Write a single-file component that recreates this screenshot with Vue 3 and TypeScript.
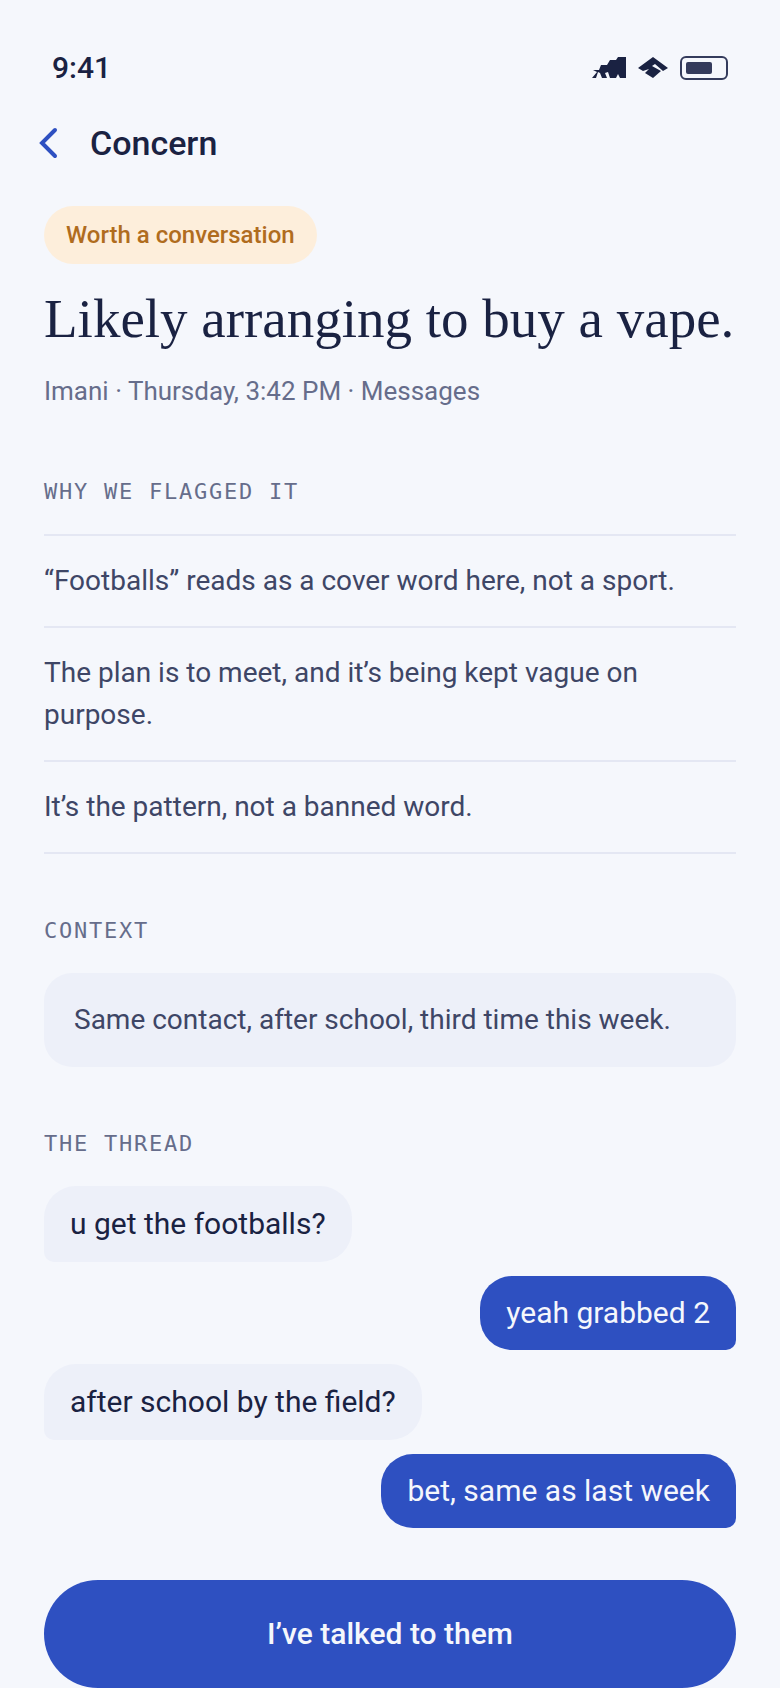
<script setup lang="ts">
interface Message {
  from: 'them' | 'me'
  text: string
}

const reasons: string[] = [
  '“Footballs” reads as a cover word here, not a sport.',
  'The plan is to meet, and it’s being kept vague on purpose.',
  'It’s the pattern, not a banned word.',
]

const thread: Message[] = [
  { from: 'them', text: 'u get the footballs?' },
  { from: 'me', text: 'yeah grabbed 2' },
  { from: 'them', text: 'after school by the field?' },
  { from: 'me', text: 'bet, same as last week' },
]
</script>

<template>
  <div class="screen">
    <div class="status">
      <span class="time">9:41</span>
      <div class="indicators">
        <svg class="signal" viewBox="0 0 34 22" aria-hidden="true">
          <path d="M34 0V21H28L26 17L24 21H18L16 15L13 16L15 21H10L8 16L6 15L4 21H0L5 15L1 13H7L9 8H15L18 3H24L26 0Z" />
        </svg>
        <svg class="wifi" viewBox="0 0 30 22" aria-hidden="true">
          <path d="M15 0L30 11L25 14L17 7L14 9L23 14L15 21L7 16L11 12L5 14L0 11Z" />
        </svg>
        <svg class="battery" viewBox="0 0 48 24" aria-hidden="true">
          <rect x="1" y="1" width="46" height="22" rx="5" />
          <rect class="charge" x="6" y="6" width="26" height="12" rx="2" />
        </svg>
      </div>
    </div>

    <header class="bar">
      <button class="back" type="button" aria-label="Back">
        <svg viewBox="0 0 20 32" aria-hidden="true"><path d="M17 3L4 16L17 29" /></svg>
      </button>
      <span class="bar-title">Concern</span>
    </header>

    <main class="content">
      <span class="badge">Worth a conversation</span>
      <h1>Likely arranging to buy a vape.</h1>
      <p class="meta">Imani · Thursday, 3:42 PM · Messages</p>

      <section>
        <h2>WHY WE FLAGGED IT</h2>
        <ul class="reasons">
          <li v-for="reason in reasons" :key="reason">{{ reason }}</li>
        </ul>
      </section>

      <section>
        <h2>CONTEXT</h2>
        <p class="context">Same contact, after school, third time this week.</p>
      </section>

      <section>
        <h2>THE THREAD</h2>
        <div class="thread">
          <p v-for="message in thread" :key="message.text" class="bubble" :class="message.from">
            {{ message.text }}
          </p>
        </div>
      </section>

      <button class="primary" type="button">I’ve talked to them</button>
    </main>
  </div>
</template>

<style>
body {
  background: #f5f7fc;
}
</style>

<style scoped>
.screen {
  box-sizing: border-box;
  min-height: 100vh;
  padding: 45px 44px 0;
  background: #f5f7fc;
  color: #1a2242;
  font-family: Roboto, "Liberation Sans", sans-serif;
}

.status {
  display: flex;
  align-items: center;
  justify-content: space-between;
  padding: 0 8px;
  height: 46px;
}

.time {
  font-size: 30px;
  font-weight: 500;
  line-height: 32px;
}

.indicators {
  display: flex;
  align-items: center;
  gap: 12px;
}

.signal {
  width: 34px;
  height: 22px;
  fill: #1a2242;
}

.wifi {
  width: 30px;
  height: 22px;
  fill: #1a2242;
}

.battery {
  width: 48px;
  height: 24px;
  fill: none;
  stroke: #343b5c;
  stroke-width: 2;
}

.battery .charge {
  fill: #343b5c;
  stroke: none;
}

.bar {
  display: flex;
  align-items: center;
  gap: 32px;
  height: 44px;
  margin: 30px 0 41px -6px;
}

.back {
  display: flex;
  padding: 0;
  border: 0;
  background: none;
}

.back svg {
  width: 20px;
  height: 32px;
  fill: none;
  stroke: #2e50c1;
  stroke-linecap: round;
  stroke-width: 4;
}

.bar-title {
  font-size: 34px;
  font-weight: 500;
}

.content {
  display: flex;
  flex-direction: column;
}

.badge {
  align-self: flex-start;
  padding: 14px 22px;
  border-radius: 29px;
  background: #fdeedb;
  color: #b06c1e;
  font-size: 24px;
  font-weight: 500;
  line-height: 30px;
}

h1 {
  margin: 22px 0 0;
  font-family: "Liberation Serif", serif;
  font-size: 55px;
  font-weight: 400;
  line-height: 66px;
}

.meta {
  margin: 20px 0 5px;
  color: #666d8b;
  font-size: 26px;
  line-height: 38px;
}

section {
  margin-top: 61px;
}

h2 {
  margin: 0 0 26px;
  color: #666d8b;
  font-family: "DejaVu Sans Mono", monospace;
  font-size: 22px;
  font-weight: 400;
  letter-spacing: 0.08em;
  line-height: 32px;
}

.reasons {
  margin: 0;
  padding: 0;
  border-top: 2px solid #e4e7f3;
  list-style: none;
}

.reasons li {
  padding: 24px 0;
  border-bottom: 2px solid #e4e7f3;
  color: #3e4666;
  font-size: 28px;
  line-height: 42px;
}

.context {
  margin: 0;
  padding: 26px 30px;
  border-radius: 28px;
  background: #edf0f9;
  color: #3e4666;
  font-size: 28px;
  line-height: 42px;
}

.thread {
  display: flex;
  flex-direction: column;
  gap: 14px;
}

.bubble {
  max-width: 80%;
  margin: 0;
  padding: 16px 26px;
  border-radius: 32px;
  font-size: 30px;
  line-height: 42px;
}

.bubble.them {
  align-self: flex-start;
  padding: 17px 26px;
  border-bottom-left-radius: 10px;
  background: #edf0f9;
}

.bubble.me {
  align-self: flex-end;
  border-bottom-right-radius: 10px;
  background: #2e50c1;
  color: #f5f7fc;
}

.primary {
  margin-top: 52px;
  padding: 33px;
  border: 0;
  border-radius: 54px;
  background: #2e50c1;
  color: #f5f7fc;
  font-family: inherit;
  font-size: 30px;
  font-weight: 500;
  line-height: 42px;
}
</style>
